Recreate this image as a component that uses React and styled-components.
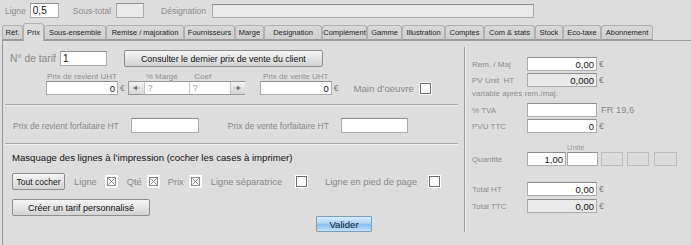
import React from "react"
import styled, { createGlobalStyle } from "styled-components"

const GlobalStyle = createGlobalStyle`
  html, body { margin: 0; padding: 0; background: #dddddd; }
  body { font-family: "Liberation Sans", Arial, sans-serif; }
`

const TABS = [
  ["Réf.", 21], ["Prix", 21], ["Sous-ensemble", 62], ["Remise / majoration", 78],
  ["Fournisseurs", 51], ["Marge", 29], ["Designation", 58], ["Complément", 45],
  ["Gamme", 35], ["Illustration", 43], ["Comptes", 39], ["Com & stats", 51],
  ["Stock", 28], ["Eco-taxe", 38], ["Abonnement", 52],
]

const Window = styled.div`
  width: 691px;
  height: 245px;
  overflow: hidden;
  background: #dddddd;
  color: #8a8a8a;
`

const TopBar = styled.div`
  display: flex;
  align-items: center;
  height: 15px;
  padding: 3px 0 0 5px;
`

const TopLabel = styled.span`
  font-size: 8.5px;
  color: #8c8c8c;
  margin-left: ${p => p.$ml || 0}px;
  margin-right: ${p => p.$mr || 0}px;
`

const Field = styled.div`
  box-sizing: border-box;
  flex: none;
  width: ${p => p.$w}px;
  height: ${p => p.$h || 14}px;
  margin-left: ${p => p.$ml || 0}px;
  background: ${p => (p.$off ? "#e9e9e9" : "#ffffff")};
  border: 1px solid #ababab;
  border-top-color: #8e8e8e;
  display: flex;
  align-items: center;
  justify-content: ${p => (p.$right ? "flex-end" : "flex-start")};
  padding: 0 2px;
  font-size: ${p => p.$fs || 9.5}px;
  color: #111;
  white-space: nowrap;
`

const Euro = styled.span`
  font-size: 8.5px;
  color: #7a7a7a;
  margin-left: 2px;
`

const TabBar = styled.div`
  display: flex;
  align-items: flex-end;
  height: 17px;
  margin-top: 5px;
  padding-left: 2px;
  position: relative;
  z-index: 1;
`

const Tab = styled.div`
  box-sizing: border-box;
  width: ${p => p.$w}px;
  height: ${p => (p.$active ? 18 : 15)}px;
  margin-bottom: ${p => (p.$active ? -1 : 0)}px;
  border: 1px solid #b0b0b0;
  border-bottom: ${p => (p.$active ? "none" : "1px solid #9a9a9a")};
  border-radius: 3px 3px 0 0;
  background: ${p => (p.$active ? "#dddddd" : "linear-gradient(#d9d9d9, #cfcfcf)")};
  font-size: 7.5px;
  color: #1e1e1e;
  display: flex;
  align-items: center;
  justify-content: center;
  white-space: nowrap;
`

const Panel = styled.div`
  display: flex;
  margin-left: 2px;
  height: 205px;
  border-top: 1px solid #9a9a9a;
  border-left: 1px solid #9a9a9a;
`

const LeftCol = styled.div`
  width: 461px;
  display: flex;
  flex-direction: column;
`

const Divider = styled.div`
  width: 1px;
  height: 185px;
  margin-top: 6px;
  background: #9c9c9c;
  border-right: 1px solid #eeeeee;
`

const RightCol = styled.div`
  flex: 1;
  padding-left: 6px;
  display: flex;
  flex-direction: column;
`

const Row = styled.div`
  display: flex;
  align-items: ${p => p.$align || "center"};
  margin-top: ${p => p.$mt || 0}px;
  padding-left: ${p => p.$pl || 0}px;
  height: ${p => (p.$h ? `${p.$h}px` : "auto")};
`

const Label = styled.span`
  font-size: ${p => p.$fs || 9.3}px;
  color: ${p => p.$color || "#8a8a8a"};
  margin-left: ${p => p.$ml || 0}px;
  white-space: nowrap;
`

const Button = styled.div`
  box-sizing: border-box;
  width: ${p => p.$w}px;
  height: ${p => p.$h || 17}px;
  margin-left: ${p => p.$ml || 0}px;
  border: 1px solid #8e8e8e;
  border-radius: 2px;
  background: linear-gradient(#f6f6f6, #e4e4e4 50%, #d3d3d3);
  font-size: ${p => p.$fs || 9}px;
  color: #111;
  display: flex;
  align-items: center;
  justify-content: center;
  white-space: nowrap;
`

const BlueButton = styled(Button)`
  border-color: #7d9cbb;
  border-radius: 1px;
  background: linear-gradient(#d8ecfd, #a9d3f6 45%, #86bff0 55%, #c4e3fc);
  color: #1b1b1b;
`

const PriceCol = styled.div`
  display: flex;
  flex-direction: column;
  align-items: flex-start;
  margin-left: ${p => p.$ml || 0}px;
`

const SmallLabel = styled.div`
  font-size: 8px;
  color: #8e8e8e;
  height: 9px;
  line-height: 9px;
  white-space: nowrap;
  text-align: center;
  box-sizing: border-box;
  padding-left: ${p => p.$pl || 0}px;
  width: ${p => (p.$w ? `${p.$w}px` : "auto")};
`

const Inline = styled.div`
  display: flex;
  align-items: center;
  margin-left: ${p => p.$ml || 0}px;
`

const Spinner = styled.div`
  box-sizing: border-box;
  display: flex;
  width: 117px;
  height: 14px;
  border: 1px solid #9a9a9a;
  background: #fff;
`

const Arrow = styled.div`
  width: 15px;
  flex: none;
  box-sizing: border-box;
  border-left: ${p => (p.$right ? "1px solid #c4c4c4" : "none")};
  background: linear-gradient(#f4f4f4, #d6d6d6);
  display: flex;
  align-items: center;
  justify-content: center;
`

const SpinField = styled.div`
  width: ${p => p.$w}px;
  flex: none;
  box-sizing: border-box;
  border-left: 1px solid #c4c4c4;
  font-size: 8.5px;
  color: #9a9a9a;
  padding-left: 3px;
  line-height: 12px;
`

const Separator = styled.div`
  width: 453px;
  margin-left: 2px;
  margin-top: ${p => p.$mt}px;
  border-top: 1px solid #a9a9a9;
  border-bottom: 1px solid #f0f0f0;
`

const Heading = styled.div`
  font-size: 9.6px;
  color: #111;
  margin-top: 7px;
  padding-left: 9px;
  line-height: 12px;
`

const Box = styled.div`
  box-sizing: border-box;
  width: 13px;
  height: 13px;
  flex: none;
  margin-left: ${p => p.$ml || 0}px;
  background: #fff;
  padding: 1px;
  display: flex;
`

const BoxInner = styled.div`
  flex: 1;
  border: 1px solid ${p => (p.$checked ? "#8c8c8c" : "#6e6e6e")};
  margin: ${p => (p.$checked ? "1px" : "0")};
  display: flex;
`

const Check = ({ checked, ml }) => (
  <Box $ml={ml}>
    <BoxInner $checked={checked}>
      {checked && (
        <svg width="7" height="7" viewBox="0 0 7 7">
          <path d="M0.5 0.5L6.5 6.5M6.5 0.5L0.5 6.5" stroke="#8a8a8a" strokeWidth="0.9" />
        </svg>
      )}
    </BoxInner>
  </Box>
)

const RLabel = styled.span`
  width: 55px;
  flex: none;
  font-size: 8px;
  color: #8e8e8e;
  white-space: nowrap;
`

const RNote = styled.div`
  font-size: 8px;
  color: #8e8e8e;
  line-height: 9px;
  height: 9px;
  margin-top: 2px;
`

const UnitLabel = styled.div`
  font-size: 7.5px;
  color: #9a9a9a;
  line-height: 9px;
  height: 9px;
  margin-top: 10px;
  padding-left: 95px;
`

const GreyBox = styled.div`
  box-sizing: border-box;
  width: ${p => p.$w}px;
  height: 14px;
  margin-left: ${p => p.$ml}px;
  border: 1px solid #bdbdbd;
  background: #dcdcdc;
`

const TriLeft = () => (
  <svg width="9" height="6" viewBox="0 0 9 6">
    <path d="M1 3L5 0.5V5.5Z" fill="#7a7a7a" />
    <path d="M5 3H8" stroke="#9a9a9a" strokeWidth="1" />
  </svg>
)

const TriRight = () => (
  <svg width="9" height="6" viewBox="0 0 9 6">
    <path d="M1 3H4" stroke="#9a9a9a" strokeWidth="1" />
    <path d="M8 3L4 0.5V5.5Z" fill="#7a7a7a" />
  </svg>
)

const App = () => (
  <Window>
    <GlobalStyle />
    <TopBar>
      <TopLabel $mr={4}>Ligne</TopLabel>
      <Field $w={29} $h={15} $fs={10}>0,5</Field>
      <TopLabel $ml={14}>Sous-total</TopLabel>
      <Field $w={28} $h={15} $ml={5} $off />
      <TopLabel $ml={17}>Désignation</TopLabel>
      <Field $w={322} $h={14} $ml={6} $off />
    </TopBar>

    <TabBar>
      {TABS.map(([name, w], i) => (
        <Tab key={name} $w={w} $active={i === 1}>{name}</Tab>
      ))}
    </TabBar>

    <Panel>
      <LeftCol>
        <Row $mt={9} $pl={7} $h={17}>
          <Label $fs={10.3}>N° de tarif</Label>
          <Field $w={47} $h={15} $ml={4} $fs={10}>1</Field>
          <Button $w={199} $ml={17} $fs={8.8}>Consulter le dernier prix de vente du client</Button>
        </Row>

        <Row $mt={5} $pl={43} $align="flex-end">
          <PriceCol>
            <SmallLabel $w={72}>Prix de revient UHT</SmallLabel>
            <Inline>
              <Field $w={72} $right>0</Field>
              <Euro>€</Euro>
            </Inline>
          </PriceCol>
          <PriceCol $ml={3}>
            <Inline>
              <SmallLabel $w={60} $pl={8}>% Marge</SmallLabel>
              <SmallLabel $w={30}>Coef</SmallLabel>
            </Inline>
            <Spinner>
              <Arrow><TriLeft /></Arrow>
              <SpinField $w={45}>?</SpinField>
              <SpinField $w={41}>?</SpinField>
              <Arrow $right><TriRight /></Arrow>
            </Spinner>
          </PriceCol>
          <PriceCol $ml={15}>
            <SmallLabel $w={72}>Prix de vente UHT</SmallLabel>
            <Inline>
              <Field $w={72} $right>0</Field>
              <Euro>€</Euro>
            </Inline>
          </PriceCol>
          <Inline $ml={15}>
            <Label $fs={9.6}>Main d’oeuvre</Label>
            <Check ml={5} />
          </Inline>
        </Row>

        <Separator $mt={9} />

        <Row $mt={12} $pl={10} $h={15}>
          <Label $fs={8.5}>Prix de revient forfaitaire HT</Label>
          <Field $w={68} $h={15} $ml={12} />
          <Label $fs={8.5} $ml={29}>Prix de vente forfaitaire HT</Label>
          <Field $w={67} $h={15} $ml={12} />
        </Row>

        <Separator $mt={10} />

        <Heading>Masquage des lignes à l’impression (cocher les cases à imprimer)</Heading>

        <Row $mt={9} $pl={9} $h={17}>
          <Button $w={53} $fs={8.5}>Tout cocher</Button>
          <Label $ml={9}>Ligne</Label>
          <Check checked ml={8} />
          <Label $ml={9}>Qté</Label>
          <Check checked ml={5} />
          <Label $ml={8}>Prix</Label>
          <Check checked ml={5} />
          <Label $ml={9}>Ligne séparatrice</Label>
          <Check ml={13} />
          <Label $ml={17}>Ligne en pied de page</Label>
          <Check ml={11} />
        </Row>

        <Row $mt={9} $pl={9}>
          <Button $w={138} $fs={9}>Créer un tarif personnalisé</Button>
        </Row>

        <Row $pl={313}>
          <BlueButton $w={56} $h={16} $fs={9.6}>Valider</BlueButton>
        </Row>
      </LeftCol>

      <Divider />

      <RightCol>
        <Row $mt={16} $h={14}>
          <RLabel>Rem. / Maj</RLabel>
          <Field $w={70} $right>0,00</Field>
          <Euro>€</Euro>
        </Row>
        <Row $mt={2} $h={14}>
          <RLabel>PV Unit&nbsp;&nbsp;HT</RLabel>
          <Field $w={70} $right $off>0,000</Field>
          <Euro>€</Euro>
        </Row>
        <RNote>variable après rem./maj.</RNote>
        <Row $mt={5} $h={14}>
          <RLabel>% TVA</RLabel>
          <Field $w={70} />
          <Label $fs={9.3} $ml={4}>FR 19,6</Label>
        </Row>
        <Row $mt={2} $h={14}>
          <RLabel>PVU TTC</RLabel>
          <Field $w={70} $right>0</Field>
          <Euro>€</Euro>
        </Row>
        <UnitLabel>Unité</UnitLabel>
        <Row $h={14}>
          <RLabel>Quantité</RLabel>
          <Field $w={39} $right>1,00</Field>
          <Field $w={31} $ml={1} />
          <GreyBox $w={22} $ml={3} />
          <GreyBox $w={22} $ml={4} />
          <GreyBox $w={23} $ml={5} />
        </Row>
        <Row $mt={16} $h={14}>
          <RLabel>Total HT</RLabel>
          <Field $w={70} $right>0,00</Field>
          <Euro>€</Euro>
        </Row>
        <Row $mt={3} $h={14}>
          <RLabel>Total TTC</RLabel>
          <Field $w={70} $right $off>0,00</Field>
          <Euro>€</Euro>
        </Row>
      </RightCol>
    </Panel>
  </Window>
)

export default App
